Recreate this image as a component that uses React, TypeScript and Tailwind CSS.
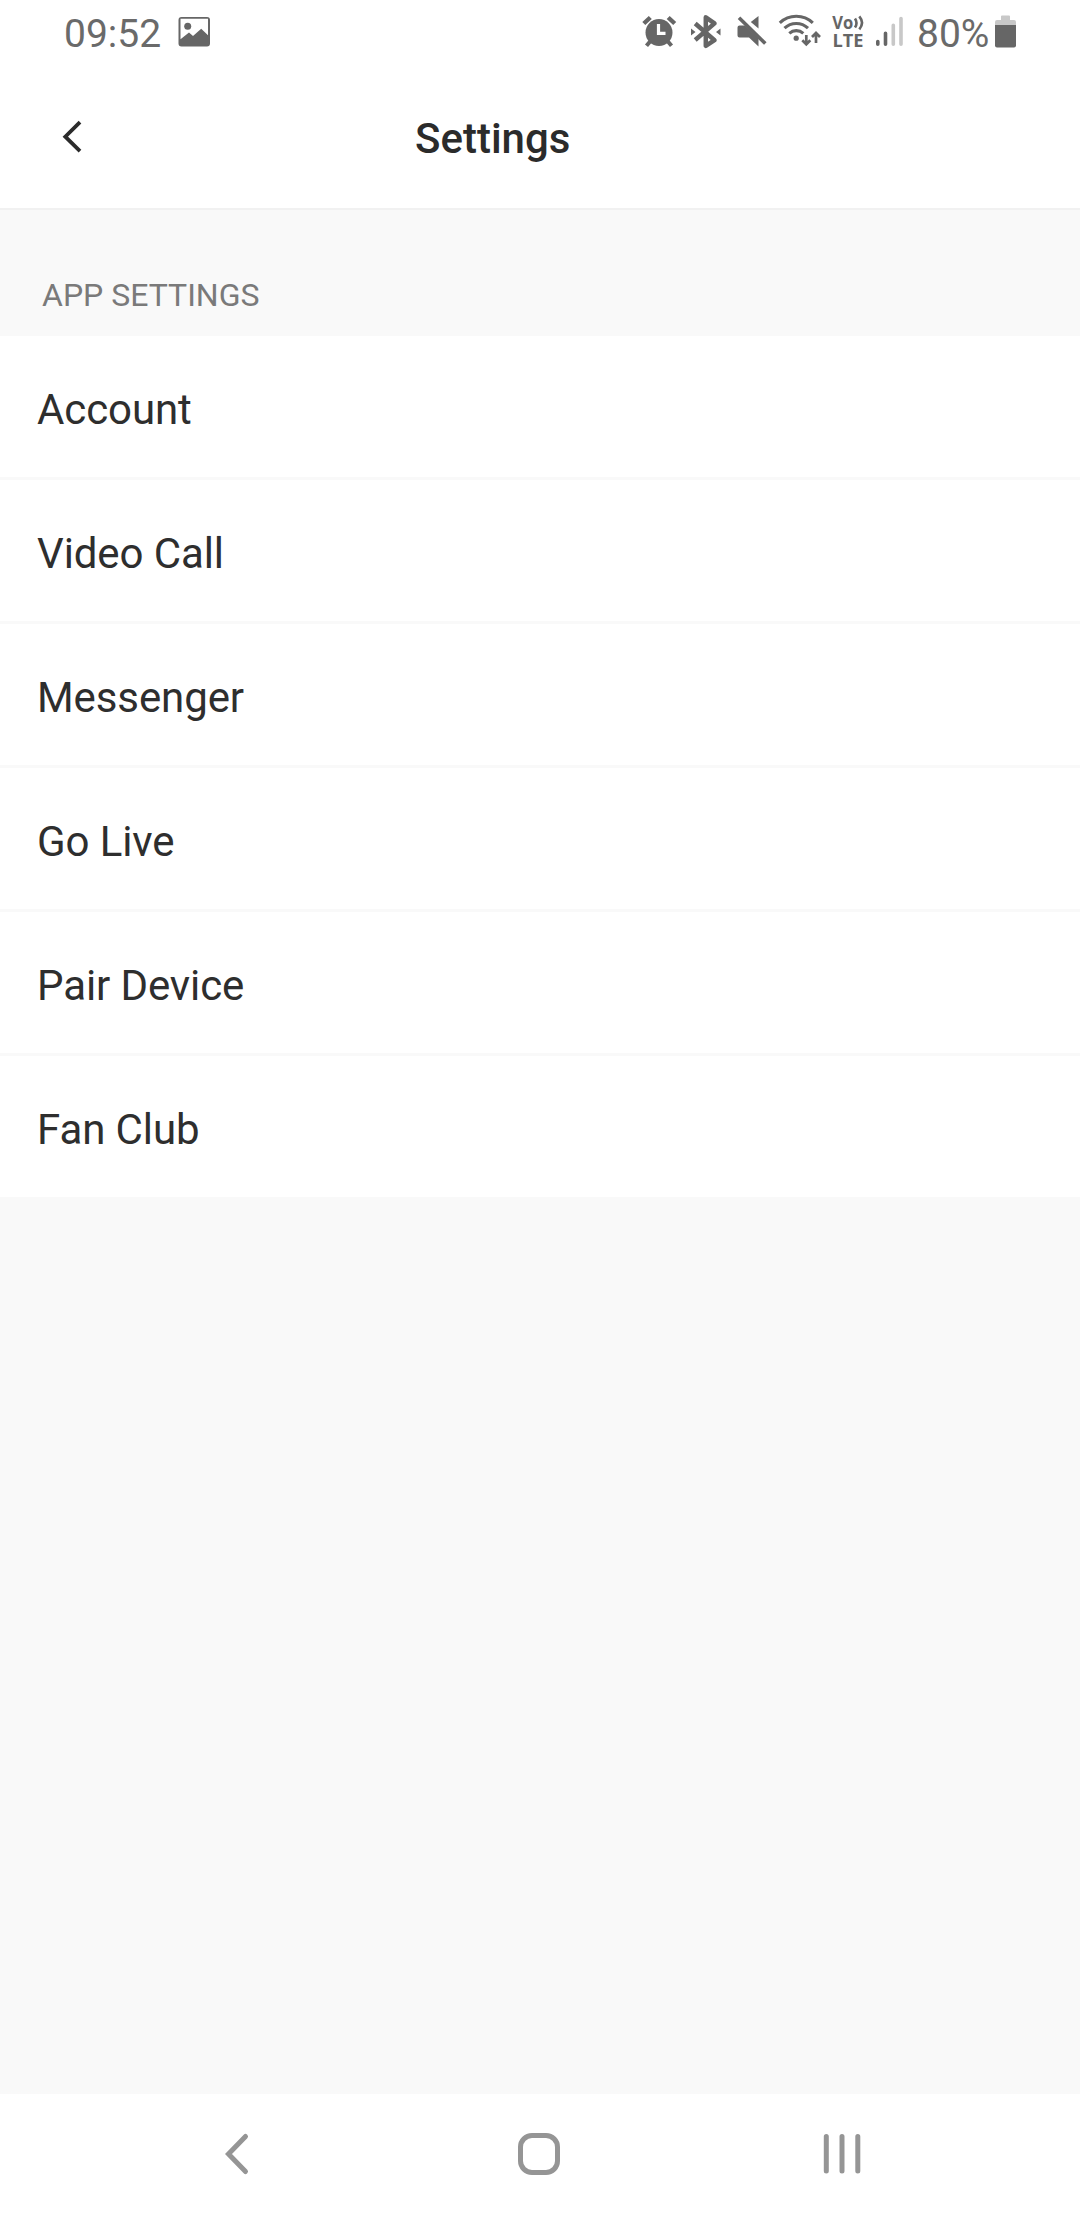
import React from 'react';

const rows = ['Account', 'Video Call', 'Messenger', 'Go Live', 'Pair Device', 'Fan Club'];

function PictureIcon() {
  return (
    <svg className="ml-[17px] h-[70px] w-[33px]" viewBox="178 0 33 70" fill="#666">
      <path fillRule="evenodd" d="M181.500 17h25.500a3 3 0 0 1 3 3v23.500a3 3 0 0 1 -3 3h-25.500a3 3 0 0 1 -3 -3v-23.500a3 3 0 0 1 3 -3zM180.500 18.800v20.500l8.500 -6.800l4 3.500l8.200 -7.300l6.800 6.500v-16.400z" />
      <circle cx="187.700" cy="26.300" r="3.500" />
    </svg>
  );
}

function AlarmIcon() {
  return (
    <svg className="h-[70px] w-[36px]" viewBox="641 0 36 70" fill="none" stroke="#666">
      <circle cx="659" cy="32.500" r="13.500" fill="#666" stroke="none" />
      <path d="M643.800 23.500l6.500 -6M668.200 17.500l6.500 6" strokeWidth="4.400" />
      <path d="M650.500 41l-4 4.700M667.500 41l4 4.700" strokeWidth="4" />
      <path d="M658.500 24v9.300h7" stroke="#fff" strokeWidth="3.200" />
    </svg>
  );
}

function BluetoothIcon() {
  return (
    <svg className="ml-[13px] h-[70px] w-[32px]" viewBox="690 0 32 70" fill="none" stroke="#666">
      <path d="M695.200 23.500L714.500 40.200L705.800 45.800V17.300L714.500 23.400L695.200 40" strokeWidth="4.500" strokeLinejoin="round" />
      <path d="M691 28.500l4.500 3.500l-4.500 3.500zM720.500 28.500l-4.500 3.500l4.500 3.500z" fill="#666" stroke="none" />
    </svg>
  );
}

function MuteIcon() {
  return (
    <svg className="ml-[14px] h-[70px] w-[32px]" viewBox="736 0 32 70" fill="#666">
      <path d="M758.500 16v12.500l-7.700 -6.500zM739.500 25.500h5.500l13.500 13v8l-9.500 -9h-9.500a2 2 0 0 1 -2 -2v-8a2 2 0 0 1 2 -2z" />
      <path d="M739 17.800L765.300 43.500" stroke="#666" strokeWidth="3.600" />
    </svg>
  );
}

function WifiIcon() {
  return (
    <svg className="ml-[10px] h-[70px] w-[44px]" viewBox="778 0 44 70" fill="none" stroke="#666">
      <path d="M779.800 22.800a24 24 0 0 1 33 0M784.500 28.200a17 17 0 0 1 23.500 0M789.300 33.300a10.500 10.500 0 0 1 14 0" strokeWidth="3.100" />
      <circle cx="796.200" cy="38.200" r="2.600" fill="#666" stroke="none" />
      <path d="M806.300 35v9.500M802.300 40.300l4 4l4 -4M816 43v-9.500M812 37l4 -4l4 4" strokeWidth="2.700" />
    </svg>
  );
}

function VolteIcon() {
  return (
    <svg className="ml-[9px] h-[70px] w-[34px]" viewBox="831 0 34 70" fill="#666">
      <text x="832.300" y="29.300" fontFamily="Open Sans" fontSize="17" fontWeight="700" textLength="21" lengthAdjust="spacingAndGlyphs">Vo</text>
      <text x="832.500" y="47" fontFamily="Open Sans" fontSize="18.500" fontWeight="700" textLength="31" lengthAdjust="spacingAndGlyphs">LTE</text>
      <path d="M855 18.500q3 4.500 0 9M859.300 16.300q5.500 6.500 0 13" fill="none" stroke="#666" strokeWidth="2.600" />
    </svg>
  );
}

function SignalIcon() {
  return (
    <svg className="ml-[10px] h-[70px] w-[29px]" viewBox="875 0 29 70" fill="none" strokeWidth="3.600" strokeLinecap="round">
      <path d="M877.800 44.300v-2.800M885.500 44.300v-11" stroke="#666" />
      <path d="M893.300 44.300v-19M901 44.300v-25.800" stroke="#c8c8c8" />
    </svg>
  );
}

function BatteryIcon() {
  return (
    <svg className="h-[70px] w-[22px]" viewBox="995 0 22 70">
      <path d="M1002 15.500h7a1 1 0 0 1 1 1v3.500h4a2 2 0 0 1 2 2v3h-21v-3a2 2 0 0 1 2 -2h4v-3.500a1 1 0 0 1 1 -1z" fill="#c8c8c8" />
      <path d="M995 25h21v20.500a2 2 0 0 1 -2 2h-17a2 2 0 0 1 -2 -2z" fill="#666" />
    </svg>
  );
}

function StatusBar() {
  return (
    <div className="flex h-[70px] justify-between pr-[63px] pl-[64px] text-[39px] leading-[68px] text-[#6a6a6a]">
      <div className="flex">
        <span className="w-[97px] whitespace-nowrap">09:52</span>
        <PictureIcon />
      </div>
      <div className="flex">
        <AlarmIcon />
        <BluetoothIcon />
        <MuteIcon />
        <WifiIcon />
        <VolteIcon />
        <SignalIcon />
        <span className="ml-[13px] w-[78px] whitespace-nowrap">80%</span>
        <BatteryIcon />
      </div>
    </div>
  );
}

function Header() {
  return (
    <header className="flex h-[140px] items-start border-b-2 border-[#f1f1f1] pl-[62px] text-[#2b2b2b]">
      <button aria-label="Back" className="mt-[48px] h-[38px] w-[22px]">
        <svg className="h-[38px] w-[22px]" viewBox="62 118 22 38" fill="none" stroke="currentColor" strokeWidth="3.800">
          <path d="M80 122.200L65.300 136.700L80 151.200" />
        </svg>
      </button>
      <h1 className="ml-[331px] pt-[44px] text-[42px] leading-[50px] font-medium">Settings</h1>
    </header>
  );
}

function NavBar() {
  return (
    <nav className="flex h-[126px] items-center pb-[6px] pl-[224px] text-[#959595]">
      <svg className="h-[44px] w-[26px]" viewBox="224 2132 26 44" fill="none" stroke="currentColor" strokeWidth="5" strokeLinecap="round">
        <path d="M245.500 2136.500L228.500 2154L245.500 2171.500" />
      </svg>
      <svg className="ml-[267px] h-[44px] w-[44px]" viewBox="517 2132 44 44" fill="none" stroke="currentColor" strokeWidth="5">
        <rect x="520.500" y="2135.500" width="37" height="37" rx="11.500" />
      </svg>
      <svg className="ml-[261px] h-[44px] w-[40px]" viewBox="822 2132 40 44" fill="none" stroke="currentColor" strokeWidth="5" strokeLinecap="round">
        <path d="M826.300 2136.500v34.500M842 2136.500v34.500M857.800 2136.500v34.500" />
      </svg>
    </nav>
  );
}

export default function App() {
  return (
    <div className="flex h-[2220px] w-[1080px] flex-col bg-white font-['Roboto',sans-serif]">
      <StatusBar />
      <Header />
      <main className="flex-1 bg-[#f9f9f9]">
        <h2 className="h-[126px] pt-[65px] pl-[42px] text-[32px] leading-[40px] text-[#7a7a7a]">APP SETTINGS</h2>
        <ul>
          {rows.map((row) => (
            <li key={row} className="h-[144px] border-b-3 border-[#f9f9f9] bg-white pt-[49px] pl-[37px] text-[42px] leading-[50px] tracking-[-0.1px] text-[#2e2e2e]">
              {row}
            </li>
          ))}
        </ul>
      </main>
      <NavBar />
    </div>
  );
}
